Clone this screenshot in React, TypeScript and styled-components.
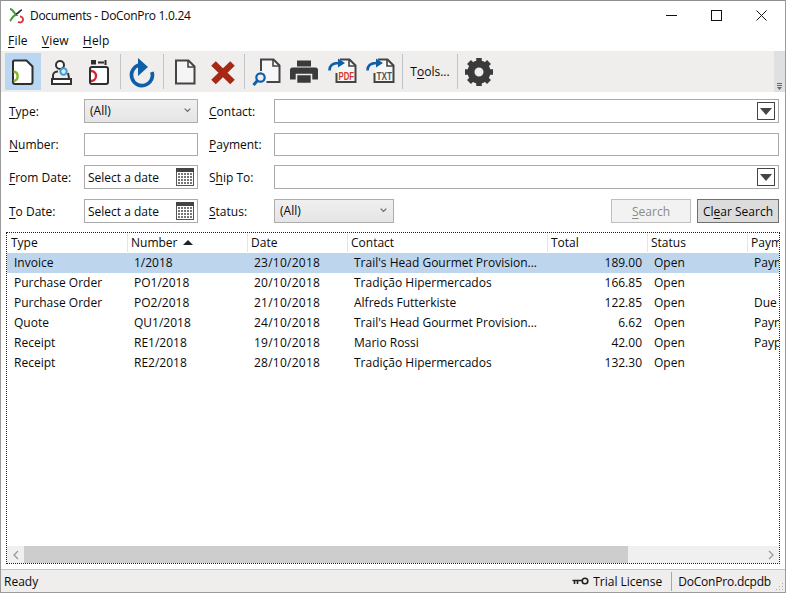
import React from "react";
import styled, { createGlobalStyle } from "styled-components";

const FONT = `"Open Sans", "Noto Sans", "Liberation Sans", sans-serif`;

const GlobalStyle = createGlobalStyle`
  html, body {
    margin: 0;
    padding: 0;
    background: #fff;
  }
  body {
    font-family: ${FONT};
    font-size: 12px;
    color: #0a0a0a;
  }
  u { text-decoration-thickness: 1px; text-underline-offset: 2px; }
`;

const Window = styled.div`
  width: 786px;
  height: 593px;
  box-sizing: border-box;
  border: 1px solid #9b9b9b;
  border-top-color: #8f8f8f;
  background: #fff;
  display: flex;
  flex-direction: column;
  overflow: hidden;
`;

const TitleBar = styled.div`
  height: 29px;
  flex: none;
  display: flex;
  align-items: center;
  padding: 0 1px 0 8px;
`;

const TitleText = styled.span`
  margin-left: 6px;
  flex: 1;
  letter-spacing: -0.3px;
`;

const WinButton = styled.div`
  width: 45px;
  height: 29px;
  display: flex;
  align-items: center;
  justify-content: center;
`;

const MenuBar = styled.div`
  height: 21px;
  flex: none;
  display: flex;
  align-items: center;
  gap: 14px;
  padding-left: 7px;
  letter-spacing: 0.2px;
`;

const Toolbar = styled.div`
  height: 41px;
  flex: none;
  display: flex;
  align-items: center;
  background: #f0eded;
  padding-left: 3px;
  position: relative;
`;

const ToolButton = styled.div<{ $active?: boolean }>`
  width: 36px;
  height: 37px;
  margin: 0 1px;
  flex: none;
  display: flex;
  align-items: center;
  justify-content: center;
  background: ${(p) => (p.$active ? "#b9d6f2" : "transparent")};
`;

const ToolSep = styled.div<{ $left?: number }>`
  width: 1px;
  height: 35px;
  flex: none;
  margin: 0 2px 0 ${(p) => p.$left ?? 2}px;
  background: #bfc4c9;
`;

const ToolText = styled.span`
  width: 50px;
  flex: none;
  text-align: center;
`;

const Gripper = styled.div`
  position: absolute;
  right: 0;
  top: 0;
  bottom: 0;
  width: 11px;
  background: #dfe0e2;
  display: flex;
  align-items: flex-end;
  justify-content: center;
  padding-bottom: 2px;
  box-sizing: border-box;
`;

const Form = styled.div`
  flex: none;
  display: grid;
  grid-template-columns: 75px 114px 76px 1fr;
  grid-template-rows: 34px 32px 34px 24px;
  padding: 7px 6px 9px 8px;
`;

const FieldLabel = styled.label<{ $gap?: boolean; $h?: number }>`
  display: flex;
  align-items: center;
  height: ${(p) => p.$h ?? 24}px;
  margin-left: ${(p) => (p.$gap ? 11 : 0)}px;
`;

const TextBox = styled.div<{ $h?: number }>`
  box-sizing: border-box;
  height: ${(p) => p.$h ?? 24}px;
  border: 1px solid #ababab;
  background: #fff;
  display: flex;
  align-items: center;
  padding: 0 3px;
  min-width: 0;
`;

const Combo = styled.div<{ $w?: number }>`
  box-sizing: border-box;
  width: ${(p) => (p.$w ? `${p.$w}px` : "100%")};
  height: 24px;
  flex: none;
  border: 1px solid #adadad;
  background: linear-gradient(#f0f0f0, #e5e5e5);
  display: flex;
  align-items: center;
  justify-content: space-between;
  padding: 0 6px 2px 5px;
`;

const DropBox = styled.div`
  box-sizing: border-box;
  width: 18px;
  height: 18px;
  margin-left: auto;
  border: 1px solid #444;
  background: #fff;
  display: flex;
  align-items: center;
  justify-content: center;
`;

const StatusRow = styled.div`
  display: flex;
  gap: 6px;
`;

const ActionButton = styled.div<{ $disabled?: boolean; $w: number; $push?: boolean }>`
  box-sizing: border-box;
  width: ${(p) => p.$w}px;
  height: 24px;
  flex: none;
  margin-left: ${(p) => (p.$push ? "auto" : "0")};
  border: 1px solid ${(p) => (p.$disabled ? "#bfbfbf" : "#6f6f6f")};
  background: ${(p) => (p.$disabled ? "#f2f2f2" : "#dcdcdc")};
  color: ${(p) => (p.$disabled ? "#8a8a8a" : "#0a0a0a")};
  display: flex;
  align-items: center;
  justify-content: center;
`;

const ListFrame = styled.div`
  flex: none;
  box-sizing: border-box;
  height: 332px;
  margin: 0 5px;
  border: 1px dotted #222;
  display: flex;
  flex-direction: column;
  overflow: hidden;
`;

const HeaderRow = styled.div`
  display: flex;
  height: 19px;
  flex: none;
  margin-bottom: 1px;
`;

const HeaderCell = styled.div<{ $w: number }>`
  width: ${(p) => p.$w}px;
  flex: none;
  box-sizing: border-box;
  padding-left: 3px;
  border-right: 1px solid #e5e5e5;
  display: flex;
  align-items: center;
  gap: 5px;
  white-space: nowrap;
  overflow: hidden;

  &:first-child {
    padding-left: 4px;
  }
`;

const Rows = styled.div`
  flex: 1;
`;

const Row = styled.div<{ $selected?: boolean }>`
  display: flex;
  height: 20px;
  padding-bottom: 2px;
  box-sizing: border-box;
  align-items: center;
  background: ${(p) => (p.$selected ? "#bdd6ee" : "transparent")};
`;

const Cell = styled.div<{ $w: number; $right?: boolean; $wide?: boolean }>`
  width: ${(p) => p.$w}px;
  flex: none;
  box-sizing: border-box;
  padding: 0 6px;
  text-align: ${(p) => (p.$right ? "right" : "left")};
  letter-spacing: ${(p) => (p.$wide ? "0.25px" : "normal")};
  white-space: nowrap;
  overflow: hidden;

  &:first-child {
    padding-left: 7px;
  }
`;

const HScroll = styled.div`
  height: 17px;
  flex: none;
  display: flex;
  background: #f0f0f0;
`;

const ScrollArrow = styled.div`
  width: 17px;
  flex: none;
  display: flex;
  align-items: center;
  justify-content: center;
`;

const ScrollThumb = styled.div`
  width: 604px;
  flex: none;
  background: #cdcdcd;
`;

const ScrollTrack = styled.div`
  flex: 1;
`;

const StatusBar = styled.div`
  margin-top: 5px;
  flex: 1;
  display: flex;
  align-items: center;
  background: #f0eded;
  border-top: 1px solid #c4c4c4;
  padding-left: 3px;
  position: relative;
`;

const StatusGrow = styled.span`
  flex: 1;
`;

const LicenseItem = styled.span`
  display: flex;
  align-items: center;
  gap: 4px;
  padding-right: 9px;
  border-right: 1px solid #a8a8a8;
  height: 19px;
`;

const FileItem = styled.span`
  padding: 0 14px 0 6px;
  letter-spacing: -0.2px;
`;

const Corner = styled.svg`
  position: absolute;
  right: 1px;
  bottom: 1px;
`;

const columns = [121, 120, 100, 200, 100, 100, 100];

const headers = ["Type", "Number", "Date", "Contact", "Total", "Status", "Payment"];

const rows = [
  ["Invoice", "1/2018", "23/10/2018", "Trail's Head Gourmet Provision...", "189.00", "Open", "Payment"],
  ["Purchase Order", "PO1/2018", "20/10/2018", "Tradição Hipermercados", "166.85", "Open", ""],
  ["Purchase Order", "PO2/2018", "21/10/2018", "Alfreds Futterkiste", "122.85", "Open", "Due"],
  ["Quote", "QU1/2018", "24/10/2018", "Trail's Head Gourmet Provision...", "6.62", "Open", "Payment"],
  ["Receipt", "RE1/2018", "19/10/2018", "Mario Rossi", "42.00", "Open", "Paypal"],
  ["Receipt", "RE2/2018", "28/10/2018", "Tradição Hipermercados", "132.30", "Open", ""],
];

const Ico: React.FC<{ children: React.ReactNode }> = ({ children }) => (
  <svg width={34} height={34} viewBox="0 0 34 34" fill="none">
    {children}
  </svg>
);

const Chevron = () => (
  <svg width="7" height="5" viewBox="0 0 7 5" fill="none">
    <path d="M.7.7l2.8 2.8L6.3.7" stroke="#666" strokeWidth="1.2" />
  </svg>
);

const DownTriangle = () => (
  <svg width="12" height="7" viewBox="0 0 12 7">
    <path d="M0 0h12L6 7z" fill="#444" />
  </svg>
);

const Calendar = () => (
  <svg width="18" height="18" viewBox="0 0 18 18" style={{ marginLeft: "auto" }}>
    <rect x="0.5" y="0.5" width="17" height="17" fill="#fff" stroke="#555" />
    <rect x="0" y="0" width="18" height="4" fill="#444" />
    {[5, 8, 11, 14].map((y) =>
      [2, 5, 8, 11, 14].map((x) => <rect key={`${x}-${y}`} x={x} y={y} width="2" height="2" fill="#777" />)
    )}
  </svg>
);

// document with a blue arrow hooked over its corner, used by the two export buttons
const ExportIcon: React.FC<{ label: string; color: string }> = ({ label, color }) => (
  <Ico>
    <path d="M15 4.5h9.5l6 6V27H11.5v-9" fill="#f7f7f7" stroke="#444" strokeWidth="2" />
    <path d="M24 4.5v6.5h6.5" stroke="#444" strokeWidth="1.6" />
    <path d="M4.5 15.5c0-5 3.5-7.5 9-7.5" stroke="#0e5ea8" strokeWidth="2.6" />
    <path d="M13 3.5l7 4.5-7 4.5z" fill="#0e5ea8" />
    <text
      x="13.5"
      y="24.5"
      fontSize="10"
      fontWeight="700"
      fill={color}
      textLength={15.5}
      lengthAdjust="spacingAndGlyphs"
      fontFamily="'Liberation Sans', sans-serif"
    >
      {label}
    </text>
  </Ico>
);

const App: React.FC = () => (
  <Window>
    <GlobalStyle />
    <TitleBar>
      <svg width="15" height="16" viewBox="0 0 15 16" fill="none">
        <path d="M1 1c3 0 4 4 6 6-3 0-4 4-6 6" stroke="#3f9a35" strokeWidth="2" />
        <path d="M13 2c-2 0-3 3-6 4" stroke="#222" strokeWidth="1.6" />
        <path d="M11 8.5a3 3 0 1 1-2 5.2" stroke="#d9333a" strokeWidth="1.8" />
      </svg>
      <TitleText>Documents - DoConPro 1.0.24</TitleText>
      <WinButton>
        <svg width="11" height="11" viewBox="0 0 11 11"><path d="M0 5.5h11" stroke="#111" /></svg>
      </WinButton>
      <WinButton>
        <svg width="11" height="11" viewBox="0 0 11 11"><rect x=".5" y=".5" width="10" height="10" fill="none" stroke="#111" /></svg>
      </WinButton>
      <WinButton>
        <svg width="11" height="11" viewBox="0 0 11 11"><path d="M.5.5l10 10M10.5.5l-10 10" stroke="#111" /></svg>
      </WinButton>
    </TitleBar>

    <MenuBar>
      <span><u>F</u>ile</span>
      <span><u>V</u>iew</span>
      <span><u>H</u>elp</span>
    </MenuBar>

    <Toolbar>
      <ToolButton $active>
        <Ico>
          <path d="M8 5.5h12.5l6 6V27a2 2 0 0 1-2 2H9a2 2 0 0 1-2-2V6.5z" fill="#fff" stroke="#2e2e2e" strokeWidth="2" />
          <path d="M7.5 16.5a4.8 4.8 0 0 1 0 9.5" stroke="#85b826" strokeWidth="2.4" />
        </Ico>
      </ToolButton>
      <ToolButton>
        <Ico>
          <circle cx="16" cy="10" r="4" fill="#fff" stroke="#333" strokeWidth="2" />
          <path d="M9 23v-2.5c0-3 3-4 5-4M24 18l1 5" stroke="#333" strokeWidth="2" />
          <path d="M8 24h19v5H8z" fill="#fff" stroke="#333" strokeWidth="2" />
          <circle cx="19.5" cy="16.5" r="3.2" stroke="#3c9bd8" strokeWidth="2" fill="#d8ecf8" />
        </Ico>
      </ToolButton>
      <ToolButton>
        <Ico>
          <rect x="8" y="12" width="18" height="17" rx="2" fill="#fff" stroke="#2e2e2e" strokeWidth="2" />
          <path d="M9 5h5v4.5H9z" fill="#2e2e2e" />
          <path d="M16 7.5h6M23.5 5v5" stroke="#2e2e2e" strokeWidth="2" />
          <path d="M9 16a5 5 0 0 1 0 10" stroke="#d8262c" strokeWidth="2.4" />
        </Ico>
      </ToolButton>
      <ToolSep />
      <ToolButton>
        <Ico>
          <path d="M14 10A10.5 10.5 0 1 0 27 17" stroke="#0e5ea8" strokeWidth="3.6" />
          <path d="M13 3l10 9-10 9z" fill="#0e5ea8" />
        </Ico>
      </ToolButton>
      <ToolSep />
      <ToolButton>
        <Ico>
          <path d="M8 5.5h12.5l6 6V28.5H8z" fill="#f5f5f5" stroke="#444" strokeWidth="2" />
          <path d="M20 5.5v6.5h6.5" stroke="#444" strokeWidth="1.6" />
        </Ico>
      </ToolButton>
      <ToolButton>
        <Ico>
          <path d="M7.5 8.5L26.5 27M26.5 8.5L7.5 27" stroke="#a52714" strokeWidth="6.5" />
        </Ico>
      </ToolButton>
      <ToolSep />
      <ToolButton>
        <Ico>
          <path d="M12 16V4.5h12.5l6 6V27H17.5" stroke="#444" strokeWidth="2" fill="#f7f7f7" />
          <path d="M24 4.5v6.5h6.5" stroke="#444" strokeWidth="1.6" />
          <circle cx="11.5" cy="22.5" r="4.2" stroke="#0e5ea8" strokeWidth="2.2" fill="#f0eded" />
          <path d="M8.5 25.5L4.5 30" stroke="#0e5ea8" strokeWidth="3" />
        </Ico>
      </ToolButton>
      <ToolButton>
        <Ico>
          <path d="M10 5.5h14v6H10z" fill="#3a3a3a" />
          <path d="M3 15a2.5 2.5 0 0 1 2.5-2.5h23A2.5 2.5 0 0 1 31 15v9.5H3z" fill="#3a3a3a" />
          <path d="M9.5 19.5h15v9h-15z" fill="#3a3a3a" stroke="#f0eded" strokeWidth="1.6" />
        </Ico>
      </ToolButton>
      <ToolButton>
        <ExportIcon label="PDF" color="#d8362c" />
      </ToolButton>
      <ToolButton>
        <ExportIcon label="TXT" color="#555" />
      </ToolButton>
      <ToolSep $left={3} />
      <ToolText>T<u>o</u>ols...</ToolText>
      <ToolSep />
      <ToolButton>
        <Ico>
          <circle cx="17" cy="17" r="8" stroke="#3a3a3a" strokeWidth="7" />
          <path d="M17 3v6M17 25v6M3 17h6M25 17h6M7 7l4.5 4.5M22.5 22.5L27 27M27 7l-4.5 4.5M11.5 22.5L7 27" stroke="#3a3a3a" strokeWidth="5.5" />
        </Ico>
      </ToolButton>
      <Gripper>
        <svg width="7" height="7" viewBox="0 0 7 7">
          <path d="M1 0.5h5M1 2.5h5" stroke="#666" />
          <path d="M1 4h5L3.5 7z" fill="#666" />
        </svg>
      </Gripper>
    </Toolbar>

    <Form>
      <FieldLabel><span><u>T</u>ype:</span></FieldLabel>
      <Combo>(All)<Chevron /></Combo>
      <FieldLabel $gap><span><u>C</u>ontact:</span></FieldLabel>
      <TextBox><DropBox><DownTriangle /></DropBox></TextBox>

      <FieldLabel $h={23}><span><u>N</u>umber:</span></FieldLabel>
      <TextBox $h={23} />
      <FieldLabel $gap $h={23}><span><u>P</u>ayment:</span></FieldLabel>
      <TextBox $h={23} />

      <FieldLabel><span><u>F</u>rom Date:</span></FieldLabel>
      <TextBox>Select a date<Calendar /></TextBox>
      <FieldLabel $gap><span>S<u>h</u>ip To:</span></FieldLabel>
      <TextBox><DropBox><DownTriangle /></DropBox></TextBox>

      <FieldLabel><span><u>T</u>o Date:</span></FieldLabel>
      <TextBox>Select a date<Calendar /></TextBox>
      <FieldLabel $gap><span><u>S</u>tatus:</span></FieldLabel>
      <StatusRow>
        <Combo $w={120}>(All)<Chevron /></Combo>
        <ActionButton $disabled $push $w={80}><span><u>S</u>earch</span></ActionButton>
        <ActionButton $w={82}><span>Cl<u>e</u>ar Search</span></ActionButton>
      </StatusRow>
    </Form>

    <ListFrame>
      <HeaderRow>
        {headers.map((h, i) => (
          <HeaderCell key={h} $w={columns[i]}>
            {h}
            {h === "Number" && (
              <svg width="10" height="5" viewBox="0 0 10 5"><path d="M5 0l5 5H0z" fill="#222" /></svg>
            )}
          </HeaderCell>
        ))}
      </HeaderRow>
      <Rows>
        {rows.map((r, i) => (
          <Row key={r[1]} $selected={i === 0}>
            {r.map((c, j) => (
              <Cell key={j} $w={columns[j]} $right={j === 4} $wide={j === 2}>{c}</Cell>
            ))}
          </Row>
        ))}
      </Rows>
      <HScroll>
        <ScrollArrow>
          <svg width="6" height="10" viewBox="0 0 6 10" fill="none"><path d="M5 1L1 5l4 4" stroke="#999" strokeWidth="1.3" /></svg>
        </ScrollArrow>
        <ScrollThumb />
        <ScrollTrack />
        <ScrollArrow>
          <svg width="6" height="10" viewBox="0 0 6 10" fill="none"><path d="M1 1l4 4-4 4" stroke="#999" strokeWidth="1.3" /></svg>
        </ScrollArrow>
      </HScroll>
    </ListFrame>

    <StatusBar>
      Ready
      <StatusGrow />
      <LicenseItem>
        <svg width="17" height="8" viewBox="0 0 17 8" fill="none">
          <circle cx="13" cy="4" r="2.8" stroke="#222" strokeWidth="1.6" />
          <path d="M10 3.5H0.5M2.5 3.5V7M5.5 3.5V7" stroke="#222" strokeWidth="1.6" />
        </svg>
        Trial License
      </LicenseItem>
      <FileItem>DoConPro.dcpdb</FileItem>
      <Corner width="10" height="10" viewBox="0 0 10 10">
        {[[8, 8], [5, 8], [2, 8], [8, 5], [5, 5], [8, 2]].map(([x, y]) => (
          <rect key={`${x}-${y}`} x={x} y={y} width="1" height="1" fill="#aaa" />
        ))}
      </Corner>
    </StatusBar>
  </Window>
);

export default App;
